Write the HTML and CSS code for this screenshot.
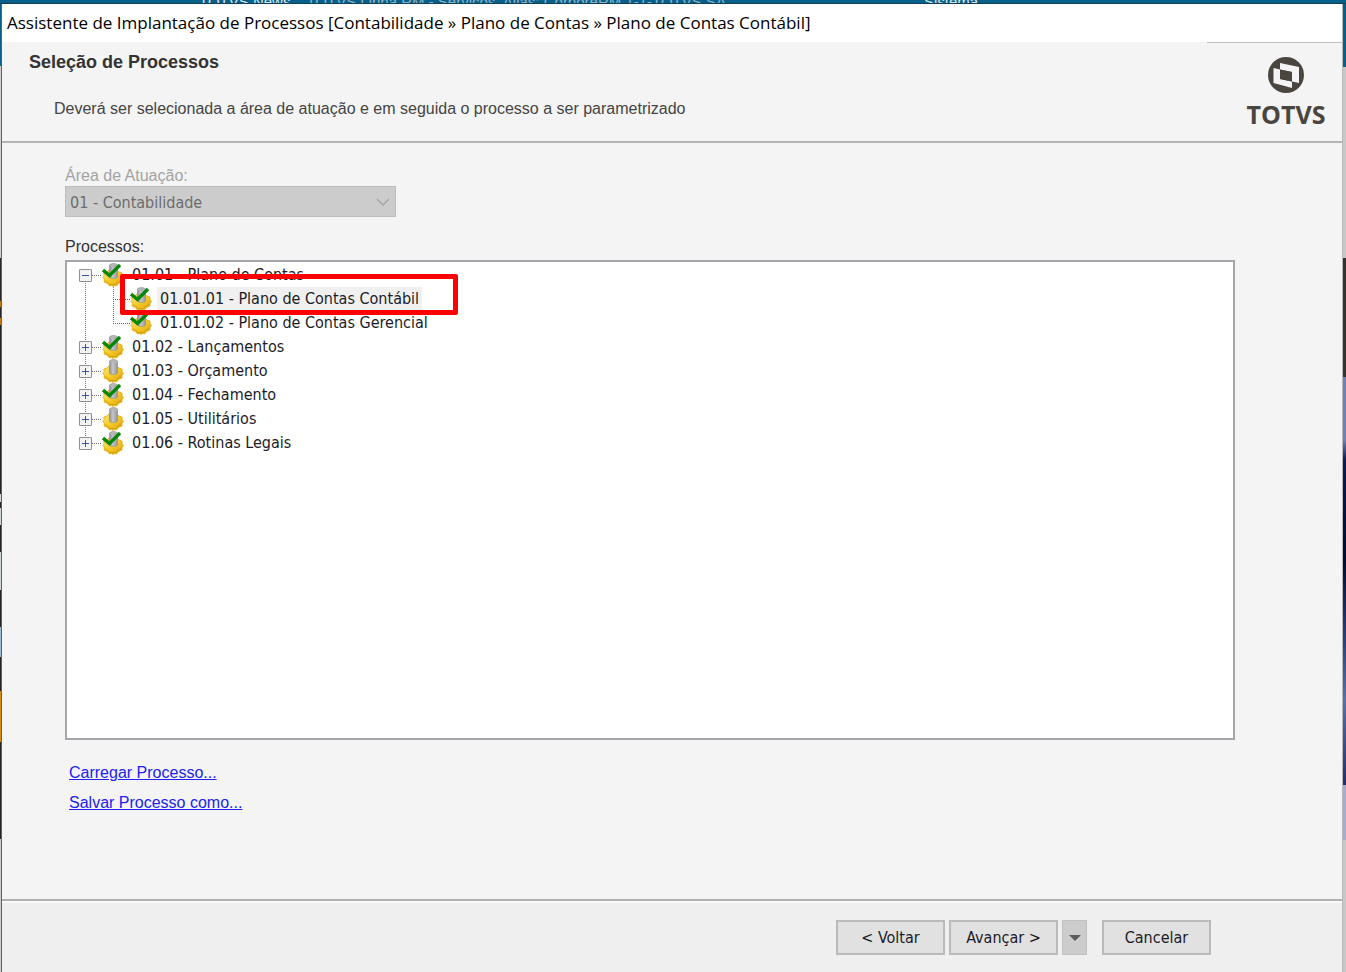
FILE: index.html
```html
<!DOCTYPE html>
<html lang="pt-BR">
<head>
  <meta charset="UTF-8">
  <title>Assistente de Implantação de Processos</title>
  <link rel="stylesheet" href="styles.css">
</head>
<body>

  <!-- shared icons -->
  <svg class="defs" width="0" height="0">
    <linearGradient id="gold" x1="0" y1="0" x2="1" y2="1">
      <stop offset="0" stop-color="#fbe67a"/>
      <stop offset="0.5" stop-color="#f5c924"/>
      <stop offset="1" stop-color="#d9a00c"/>
    </linearGradient>
    <linearGradient id="steel">
      <stop offset="0" stop-color="#8d8d92"/>
      <stop offset="0.4" stop-color="#c6c6ca"/>
      <stop offset="1" stop-color="#96969b"/>
    </linearGradient>
    <symbol id="gear" viewBox="0 0 22 24">
      <path d="M2 10l3-1 2-2h8l2 2 3 1v2.500l1.500 2-1.500 2v2.500l-3.500 1.500-2 2.500-2-.5-1.500 1-1.500-1-2 .5-2-2.500-3.500-1.500.5-2.500-1.500-2 1-2z" fill="url(#gold)" stroke="#e0aa14" stroke-width=".8"/>
      <path d="M3 17.500l2.500 1.500 2 2.500h6l2.500-2.500 3-1.500" fill="none" stroke="#cf980c" stroke-width=".8"/>
      <path d="M7.500 2.500q0-2 4-2t4 2v11q0 2-4 2t-4-2z" fill="url(#steel)" stroke="#8b8b90" stroke-width=".6"/>
      <ellipse cx="11.500" cy="2.500" rx="3.500" ry="1.500" fill="#b5b5b9"/>
    </symbol>
    <symbol id="check" viewBox="0 0 22 24">
      <path d="M1 7l6.500 5.500L18 2" fill="none" stroke="#078707" stroke-width="3.400"/>
    </symbol>
  </svg>

  <div class="backdrop">
    <span class="backdrop-tab">TOTVS News</span>
    <span>TOTVS Linha RM - Serviços&nbsp; Alias: CorporeRM 1-1-TOTVS SA</span>
    <span class="backdrop-system">Sistema</span>
  </div>

  <div class="window">
    <div class="titlebar">Assistente de Implantação de Processos [Contabilidade » Plano de Contas » Plano de Contas Contábil]</div>

    <header class="header">
      <div class="heading">
        <h1>Seleção de Processos</h1>
        <p>Deverá ser selecionada a área de atuação e em seguida o processo a ser parametrizado</p>
      </div>
      <div class="logo">
        <svg width="38" height="38" viewBox="0 0 38 38">
          <circle cx="19" cy="19" r="18" fill="#4b4540"/>
          <path d="M13 7l19 4v16l-7-1.500V16l-12-2.500z" fill="#f4f4f4"/>
          <path d="M6.500 12l6.500 1.500v9.500l12 2.500v6.500L6.500 27z" fill="#f4f4f4"/>
          <path d="M13 13.500L25 16v9.500L13 23z" fill="#4b4540"/>
        </svg>
        <span>TOTVS</span>
      </div>
    </header>

    <main class="content">
      <label class="disabled" for="area">Área de Atuação:</label>
      <div class="combo">
        <select id="area" disabled>
          <option>01 - Contabilidade</option>
        </select>
        <svg width="14" height="8" viewBox="0 0 14 8"><path d="M1 1l6 6 6-6" fill="none" stroke="#a6a6a6" stroke-width="1.500"/></svg>
      </div>

      <div class="processos" id="processos">Processos:</div>
      <div class="tree-box">
        <ul class="tree" role="tree" aria-labelledby="processos">
          <li role="treeitem" aria-expanded="true">
            <div class="row">
              <button class="toggle minus" type="button" aria-label="Recolher"></button><i class="dots"></i>
              <svg class="icon"><use href="#gear"/><use href="#check"/></svg>
              <span class="text">01.01 - Plano de Contas</span>
            </div>
            <ul role="group">
              <li role="treeitem" aria-selected="true">
                <div class="row selected">
                  <i class="dots"></i>
                  <svg class="icon"><use href="#gear"/><use href="#check"/></svg>
                  <span class="text">01.01.01 - Plano de Contas Contábil</span>
                  <div class="marker"></div>
                </div>
              </li>
              <li role="treeitem">
                <div class="row">
                  <i class="dots"></i>
                  <svg class="icon"><use href="#gear"/><use href="#check"/></svg>
                  <span class="text">01.01.02 - Plano de Contas Gerencial</span>
                </div>
              </li>
            </ul>
          </li>
          <li role="treeitem">
            <div class="row">
              <button class="toggle" type="button" aria-label="Expandir"></button><i class="dots"></i>
              <svg class="icon"><use href="#gear"/><use href="#check"/></svg>
              <span class="text">01.02 - Lançamentos</span>
            </div>
          </li>
          <li role="treeitem">
            <div class="row">
              <button class="toggle" type="button" aria-label="Expandir"></button><i class="dots"></i>
              <svg class="icon"><use href="#gear"/></svg>
              <span class="text">01.03 - Orçamento</span>
            </div>
          </li>
          <li role="treeitem">
            <div class="row">
              <button class="toggle" type="button" aria-label="Expandir"></button><i class="dots"></i>
              <svg class="icon"><use href="#gear"/><use href="#check"/></svg>
              <span class="text">01.04 - Fechamento</span>
            </div>
          </li>
          <li role="treeitem">
            <div class="row">
              <button class="toggle" type="button" aria-label="Expandir"></button><i class="dots"></i>
              <svg class="icon"><use href="#gear"/></svg>
              <span class="text">01.05 - Utilitários</span>
            </div>
          </li>
          <li role="treeitem">
            <div class="row">
              <button class="toggle" type="button" aria-label="Expandir"></button><i class="dots"></i>
              <svg class="icon"><use href="#gear"/><use href="#check"/></svg>
              <span class="text">01.06 - Rotinas Legais</span>
            </div>
          </li>
        </ul>
      </div>

      <div class="links">
        <a href="#">Carregar Processo...</a>
        <a href="#">Salvar Processo como...</a>
      </div>
    </main>

    <footer class="footer">
      <button class="btn" type="button">&lt; Voltar</button>
      <button class="btn" type="button">Avançar &gt;</button>
      <button class="btn-drop" type="button" aria-label="Mais opções"><svg width="12" height="6" viewBox="0 0 12 6"><path d="M0 0h12L6 6z" fill="#5c5c5c"/></svg></button>
      <button class="btn btn-cancel" type="button">Cancelar</button>
    </footer>
  </div>

</body>
</html>
```

FILE: styles.css
```css
* {
  box-sizing: border-box;
}

body {
  margin: 0;
  height: 100vh;
  display: flex;
  flex-direction: column;
  overflow: hidden;
  font-family: "Liberation Sans", Arial, sans-serif;
  font-size: 16px;
  color: #333;
  /* strips of the application behind the dialog */
  background:
    linear-gradient(#07608a 66px, #d0d0d0 66px 258px, #2b2825 258px 301px, #c97a12 301px 307px, #2b2825 307px 318px, #c97a12 318px 325px, #232326 325px 494px, #cfd6d8 494px 502px, #232326 502px 508px, #cfd6d8 508px 525px, #232326 525px 552px, #cfd6d8 552px 590px, #232326 590px 627px, #9dbbd0 627px 657px, #232326 657px 691px, #d58a14 691px 742px, #232326 742px 839px, #cdcdcd 839px) 0 0 / 2px 100% no-repeat,
    linear-gradient(#07608a 67px, #c8c8c8 67px 258px, #353330 258px 377px, #7280b8 377px 440px, #0a1a55 460px, #020a33 560px, #2b3f80 640px, #5a70ad 700px, #232d6e 785px, #a9abd0 785px 840px, #c8c8c8 840px) 100% 0 / 4px 100% no-repeat,
    #07608a;
}

.defs {
  position: absolute;
}

.backdrop {
  flex: none;
  display: flex;
  align-items: center;
  gap: 16px;
  height: 4px;
  padding-left: 199px;
  overflow: hidden;
  font-size: 15px;
  line-height: 16px;
  color: #8fb4c8;
  border-bottom: 1px solid #123f55;
  white-space: nowrap;
}

.backdrop-tab {
  color: #dce9ef;
}

.backdrop-system {
  margin-left: 182px;
  color: #dce9ef;
}

.window {
  flex: 1;
  display: flex;
  flex-direction: column;
  margin: 0 3px 0 1px;
  border-left: 1px solid #5c6266;
  border-right: 1px solid #b8b8b8;
  background: #f4f4f4;
}

.titlebar {
  height: 38px;
  padding-left: 5px;
  background: #fff;
  color: #000;
  font-family: "Open Sans", "Segoe UI", sans-serif;
  font-size: 17px;
  line-height: 38px;
  white-space: nowrap;
}

.header {
  display: flex;
  justify-content: space-between;
  height: 101px;
  border-bottom: 2px solid #b4b4b4;
}

.heading {
  padding: 8px 0 0 27px;
}

.heading h1 {
  margin: 0;
  font-size: 18px;
  line-height: 24px;
}

.heading p {
  margin: 23px 0 0 25px;
  line-height: 24px;
  color: #444;
}

.logo {
  display: flex;
  flex-direction: column;
  align-items: center;
  width: 135px;
  padding: 13px 0 0 23px;
  border-top: 1px solid #bdbdbd;
  color: #4b4540;
  font-family: "Open Sans", sans-serif;
  font-size: 25px;
  font-weight: bold;
  line-height: 40px;
}

.logo svg {
  flex: none;
}

.content {
  flex: 1;
  display: flex;
  flex-direction: column;
  padding: 22px 107px 81px 63px;
}

.disabled {
  line-height: 21px;
  color: #a3a3a3;
}

.combo {
  display: grid;
  align-items: center;
  width: 331px;
}

.combo select,
.combo svg {
  grid-area: 1 / 1;
}

.combo svg {
  justify-self: end;
  margin-right: 6px;
}

.combo select {
  appearance: none;
  height: 31px;
  padding: 1px 4px 0;
  border: 1px solid #bcbcbc;
  border-radius: 0;
  background: #ccc;
  color: #6d6d6d;
  opacity: 1;
  font-family: "DejaVu Sans Condensed", Tahoma, sans-serif;
  font-size: 16px;
}

.processos {
  margin-top: 18px;
  padding-bottom: 1px;
  line-height: 24px;
}

.tree-box {
  flex: 1;
  border: 2px solid #a3a6ab;
  background: #fff;
  padding-top: 1px;
}

.tree,
.tree ul {
  margin: 0;
  padding: 0;
  list-style: none;
}

.tree {
  color: #1c1c28;
  font-family: "DejaVu Sans Condensed", Tahoma, sans-serif;
}

/* dotted trunk line between siblings */
.tree li {
  background: repeating-linear-gradient(#777 0 1px, transparent 1px 2px) 18px 0 / 1px 100% no-repeat;
}

.tree > li:first-child {
  background-position-y: 12px;
}

.tree > li:last-child {
  background-size: 1px 12px;
}

.tree ul {
  margin-left: 46px;
}

.tree ul li {
  background-position-x: 0;
}

.tree ul li:last-child {
  background-size: 1px 12px;
}

.row {
  position: relative;
  display: flex;
  align-items: center;
  height: 24px;
}

.toggle {
  width: 13px;
  height: 13px;
  margin-left: 12px;
  padding: 0;
  border: 1px solid #8f8f8f;
  border-radius: 1px;
  background:
    linear-gradient(#3a56a8, #3a56a8) center / 7px 1px no-repeat,
    linear-gradient(#3a56a8, #3a56a8) center / 1px 7px no-repeat,
    #f3f3f3;
}

.toggle.minus {
  background:
    linear-gradient(#3a56a8, #3a56a8) center / 7px 1px no-repeat,
    #f3f3f3;
}

.dots {
  width: 10px;
  height: 1px;
  background: repeating-linear-gradient(90deg, #666 0 1px, transparent 1px 2px);
}

.tree ul .dots {
  width: 17px;
}

.icon {
  width: 22px;
  height: 24px;
}

.text {
  margin-left: 5px;
  padding: 0 3px;
  line-height: 24px;
  white-space: nowrap;
}

.selected .text {
  background: #f0f0f0;
}

.marker {
  position: absolute;
  z-index: 1;
  left: 7px;
  top: -13px;
  width: 338px;
  height: 41px;
  border: 5px solid #f00;
  border-radius: 2px;
}

.links {
  display: flex;
  flex-direction: column;
  align-items: flex-start;
  margin: 18px 0 0 4px;
}

.links a {
  color: #2222f0;
  line-height: 30px;
}

.footer {
  display: flex;
  justify-content: flex-end;
  gap: 4px;
  height: 73px;
  padding: 19px 131px 0 0;
  border-top: 2px solid #b0b0b0;
  background: #efefef;
  box-shadow: inset 0 2px #fafafa;
}

.btn {
  width: 109px;
  height: 35px;
  border: 2px solid #bababa;
  background: #e1e1e1;
  color: #1c1c28;
  font-family: "DejaVu Sans Condensed", Tahoma, sans-serif;
  font-size: 16px;
}

.btn-drop {
  width: 25px;
  height: 35px;
  padding: 0;
  border: 1px solid #c0c0c0;
  background: #ccc;
}

.btn-drop svg {
  display: block;
  margin: 0 auto;
}

.btn-cancel {
  margin-left: 11px;
}
```
